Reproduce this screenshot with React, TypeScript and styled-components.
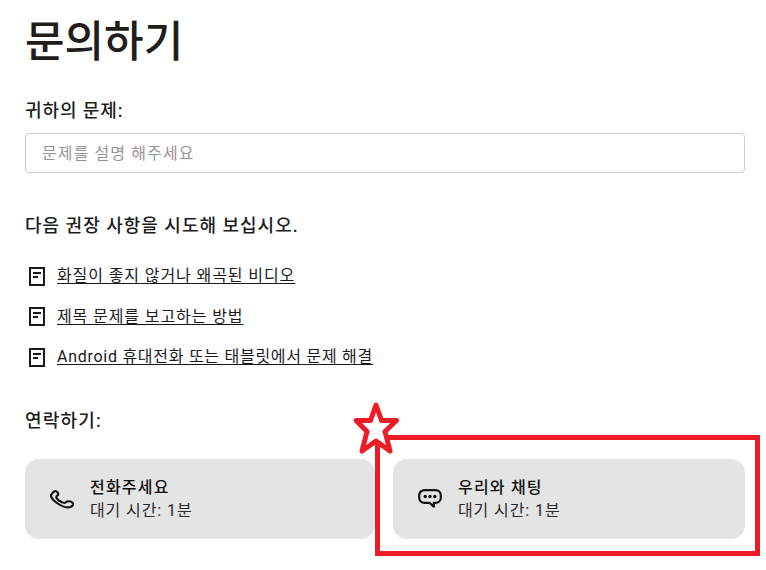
import * as React from 'react';
import styled, { createGlobalStyle } from 'styled-components';

const GlobalStyle = createGlobalStyle`
  html, body {
    margin: 0;
    padding: 0;
    background: #fff;
  }
  body {
    font-family: 'Roboto', 'Noto Sans CJK KR', sans-serif;
    color: #1a1a1a;
  }
`;

const Page = styled.div`
  position: relative;
  width: 766px;
  height: 570px;
  padding: 0 21px 0 25px;
  box-sizing: border-box;
  overflow: hidden;
`;

const Title = styled.h1`
  margin: 0;
  padding-top: 12px;
  font-size: 43px;
  line-height: 60px;
  font-weight: 500;
  color: #211d1b;
`;

const Label = styled.h2<{ $top: number; $spacing: number }>`
  margin: ${props => props.$top}px 0 0;
  font-size: 18px;
  line-height: 26px;
  font-weight: 500;
  letter-spacing: ${props => props.$spacing}px;
  color: #1c1c1c;
`;

const Field = styled.input`
  display: block;
  width: 100%;
  height: 40px;
  margin-top: 9px;
  padding: 0 16px;
  box-sizing: border-box;
  border: 1px solid #ccc;
  border-radius: 4px;
  font-family: inherit;
  font-size: 16px;
  letter-spacing: 1.1px;
  outline: none;
  &::placeholder {
    color: #949494;
    opacity: 1;
  }
`;

const Links = styled.ul`
  list-style: none;
  margin: 25px 0 0;
  padding: 0 0 0 4px;
  display: flex;
  flex-direction: column;
  gap: 16.5px;
`;

const LinkRow = styled.li`
  display: flex;
  align-items: center;
  gap: 12px;
  height: 24px;
`;

const Article = styled.a<{ $spacing: number }>`
  font-size: 16px;
  line-height: 22px;
  letter-spacing: ${props => props.$spacing}px;
  color: #1a1a1a;
  text-decoration: underline;
  text-underline-offset: 2px;
`;

const Cards = styled.div`
  display: grid;
  grid-template-columns: 350px 352px;
  gap: 18px;
  margin-top: 25px;
`;

const Card = styled.div`
  display: flex;
  align-items: center;
  height: 80px;
  padding-left: 25px;
  gap: 16px;
  box-sizing: border-box;
  background: #e4e4e4;
  border-radius: 14px;
`;

const CardText = styled.div`
  display: flex;
  flex-direction: column;
`;

const CardTitle = styled.div`
  font-size: 16px;
  line-height: 23px;
  font-weight: 500;
  letter-spacing: 1.2px;
  color: #111;
`;

const CardMeta = styled.div`
  font-size: 16px;
  line-height: 23px;
  letter-spacing: 0.9px;
  color: #2b2b2b;
`;

const Highlight = styled.div`
  position: absolute;
  left: 375px;
  top: 435px;
  width: 385px;
  height: 121px;
  box-sizing: border-box;
  border: 5px solid #ed1c24;
  pointer-events: none;
`;

const StarMark = styled.svg`
  position: absolute;
  left: 352px;
  top: 400px;
  pointer-events: none;
`;

const DocIcon = () => (
  <svg width="16" height="19" viewBox="0 0 16 19" fill="none" stroke="#1a1a1a" strokeWidth="2">
    <rect x="1" y="1" width="14" height="17" />
    <path d="M4 6h8M4 10h5" />
  </svg>
);

const PhoneIcon = () => (
  <svg width="24" height="19" viewBox="2 1.500 20 20" preserveAspectRatio="none" fill="none" stroke="#111" strokeWidth="2.2" strokeLinejoin="round">
    <path
      vectorEffect="non-scaling-stroke"
      d="M3.2 6.200c-.8 1.700.6 5 3.800 8.200 3.500 3.400 8.500 6 11.400 5.300 2.200-.6 3.600-3 2.600-4.500-.9-1.200-3.300-2-4.500-1.700-1.200.3-1.300 1.700-2.500 1.700-1.500 0-3.300-1.300-4.700-2.700-1.300-1.400-2.300-2.900-2.100-3.900.2-1.200 1.600-1.300 1.700-2.500.1-1.100-.8-2.900-1.900-3.300C5.300 2 3.900 4.700 3.200 6.200z"
    />
  </svg>
);

const ChatIcon = () => (
  <svg width="24" height="20" viewBox="0 0 24 20" fill="none">
    <path
      d="M6.500 1.200h11c2.900 0 5.300 2.200 5.300 5v2.600c0 2.800-2.400 5-5.300 5h-1.700v3.900l-4.300-3.900H6.500c-2.900 0-5.300-2.200-5.300-5V6.200c0-2.800 2.400-5 5.300-5z"
      stroke="#111"
      strokeWidth="2.2"
      strokeLinejoin="round"
    />
    <circle cx="7.200" cy="7.500" r="1.700" fill="#111" />
    <circle cx="12" cy="7.500" r="1.700" fill="#111" />
    <circle cx="16.800" cy="7.500" r="1.700" fill="#111" />
  </svg>
);

const articles = [
  { text: '화질이 좋지 않거나 왜곡된 비디오', spacing: 0.9 },
  { text: '제목 문제를 보고하는 방법', spacing: 0.9 },
  { text: 'Android 휴대전화 또는 태블릿에서 문제 해결', spacing: 0.73 },
];

const App = () => (
  <Page>
    <GlobalStyle />
    <Title>문의하기</Title>
    <Label $top={26} $spacing={0.9}>귀하의 문제:</Label>
    <Field placeholder="문제를 설명 해주세요" />
    <Label $top={40} $spacing={1}>다음 권장 사항을 시도해 보십시오.</Label>
    <Links>
      {articles.map(item => (
        <LinkRow key={item.text}>
          <DocIcon />
          <Article href="#" $spacing={item.spacing}>{item.text}</Article>
        </LinkRow>
      ))}
    </Links>
    <Label $top={39} $spacing={1.2}>연락하기:</Label>
    <Cards>
      <Card>
        <PhoneIcon />
        <CardText>
          <CardTitle>전화주세요</CardTitle>
          <CardMeta>대기 시간: 1분</CardMeta>
        </CardText>
      </Card>
      <Card>
        <ChatIcon />
        <CardText>
          <CardTitle>우리와 채팅</CardTitle>
          <CardMeta>대기 시간: 1분</CardMeta>
        </CardText>
      </Card>
    </Cards>
    <Highlight />
    <StarMark width="50" height="58" viewBox="0 0 50 58">
      <path
        d="M24 5l5.500 15.500H44.500L33 31.500l5 19.500L24 41 10 51l5-19.500L4 20.500h14.500z"
        fill="#fff"
        stroke="#ed1c24"
        strokeWidth="5"
        strokeLinejoin="round"
      />
    </StarMark>
  </Page>
);

export default App;
